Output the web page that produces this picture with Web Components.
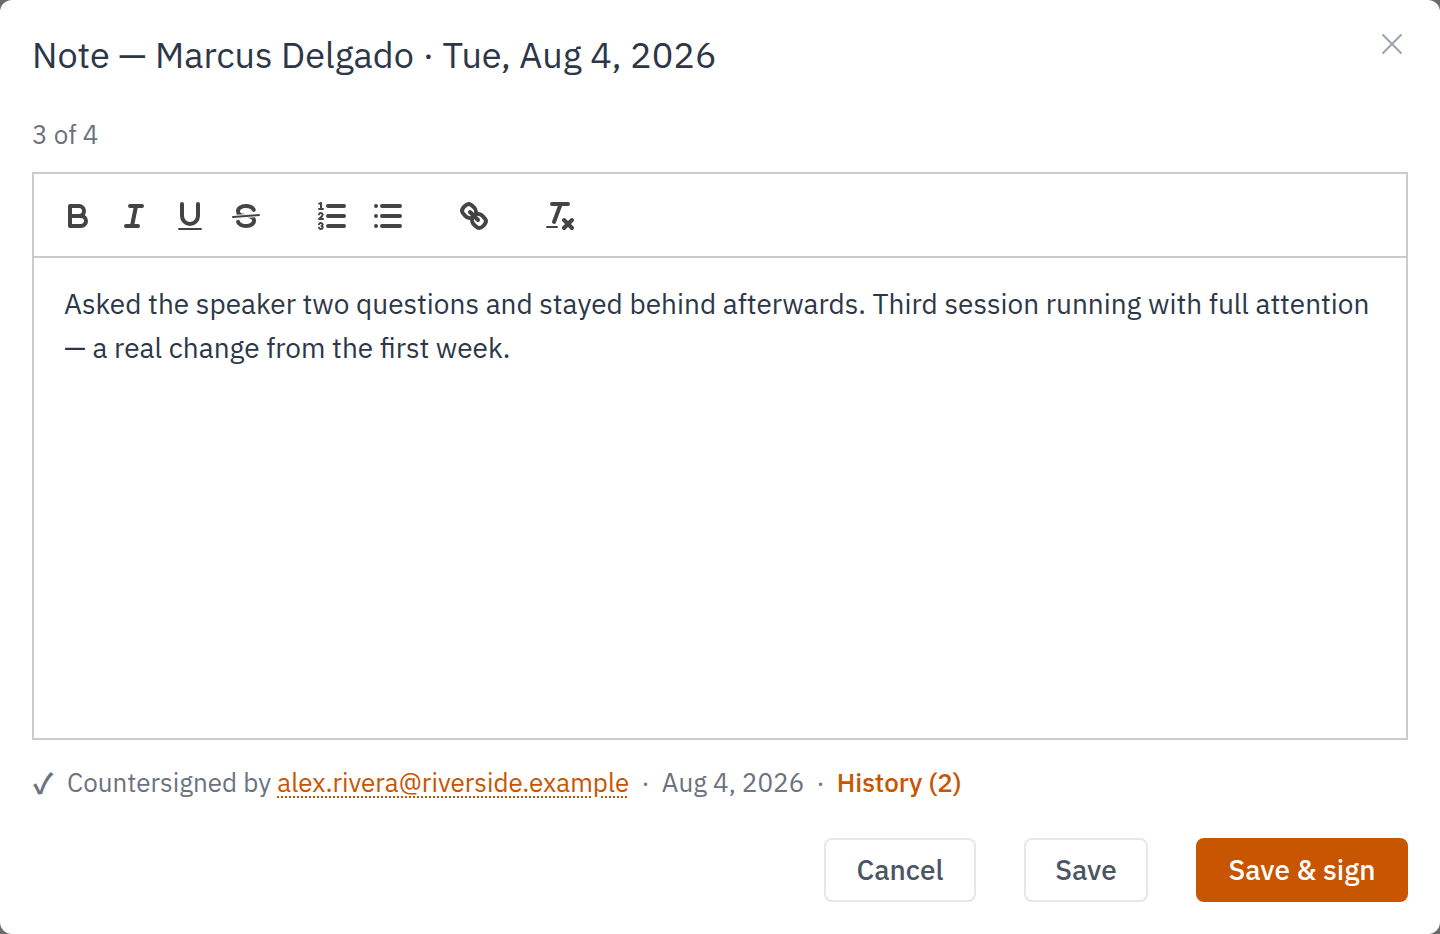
<!DOCTYPE html>
<html>
<head>
<meta charset="utf-8">
<style>
  html, body { margin: 0; height: 100%; background: #6b6b6b; }
  body { font-family: "IBM Plex Sans", "Noto Sans", sans-serif; }
</style>
</head>
<body>
<note-dialog></note-dialog>
<script>
const FONT = '"IBM Plex Sans", "Noto Sans", sans-serif';

class ToolButton extends HTMLElement {
  constructor() {
    super();
    this.attachShadow({ mode: 'open' });
    const icons = {
      bold: '<path class="s" d="M5,4H9.5A2.5,2.5,0,0,1,12,6.5v0A2.5,2.5,0,0,1,9.5,9H5A0,0,0,0,1,5,9V4A0,0,0,0,1,5,4Z"/><path class="s" d="M5,9h5.5A2.5,2.5,0,0,1,13,11.5v0A2.5,2.5,0,0,1,10.5,14H5a0,0,0,0,1,0,0V9A0,0,0,0,1,5,9Z"/>',
      italic: '<line class="s" x1="7" x2="13" y1="4" y2="4"/><line class="s" x1="5" x2="11" y1="14" y2="14"/><line class="s" x1="8" x2="10" y1="14" y2="4"/>',
      underline: '<path class="s" d="M5,3V9a4.006,4.006,0,0,0,4,4H9a4.006,4.006,0,0,0,4-4V3"/><rect class="f" height="1" rx="0.5" ry="0.5" width="12" x="3" y="15"/>',
      strike: '<line class="s t" x1="15.5" x2="2.5" y1="8.5" y2="9.5"/><path class="f" d="M9.007,8C6.542,7.791,6,7.519,6,6.5,6,5.792,7.283,5,9,5c1.571,0,2.765.679,2.969,1.309a1,1,0,0,0,1.9-.617C13.356,4.106,11.354,3,9,3,6.2,3,4,4.538,4,6.5a3.2,3.2,0,0,0,.5,1.843Z"/><path class="f" d="M8.984,10C11.457,10.208,12,10.479,12,11.5c0,.708-1.283,1.5-3,1.5-1.571,0-2.765-.679-2.969-1.309a1,1,0,1,0-1.9.617C4.644,13.894,6.646,15,9,15c2.8,0,5-1.538,5-3.5a3.2,3.2,0,0,0-.5-1.843Z"/>',
      ordered: '<line class="s" x1="7" x2="15" y1="4" y2="4"/><line class="s" x1="7" x2="15" y1="9" y2="9"/><line class="s" x1="7" x2="15" y1="14" y2="14"/><line class="s t" x1="2.5" x2="4.5" y1="5.5" y2="5.5"/><path class="f" d="M3.5,6A0.5,0.5,0,0,1,3,5.5V3.085l-0.276.138A0.5,0.5,0,0,1,2.053,3c-0.124-.247-0.023-0.324.224-0.447l1-.5A0.5,0.5,0,0,1,4,2.5v3A0.5,0.5,0,0,1,3.5,6Z"/><path class="s t" d="M4.5,10.5h-2c0-.234,1.85-1.076,1.85-2.234A0.959,0.959,0,0,0,2.5,8.156"/><path class="s t" d="M2.5,14.846a0.959,0.959,0,0,0,1.85-.109A0.7,0.7,0,0,0,3.75,14a0.688,0.688,0,0,0,.6-0.736,0.959,0.959,0,0,0-1.85-.109"/>',
      bullet: '<line class="s" x1="6" x2="15" y1="4" y2="4"/><line class="s" x1="6" x2="15" y1="9" y2="9"/><line class="s" x1="6" x2="15" y1="14" y2="14"/><line class="s" x1="3" x2="3" y1="4" y2="4"/><line class="s" x1="3" x2="3" y1="9" y2="9"/><line class="s" x1="3" x2="3" y1="14" y2="14"/>',
      link: '<line class="s" x1="7" x2="11" y1="7" y2="11"/><path class="s" d="M8.9,4.577a3.476,3.476,0,0,1,.36,4.679A3.476,3.476,0,0,1,4.577,8.9C3.185,7.5,2.035,6.4,4.217,4.217S7.5,3.185,8.9,4.577Z"/><path class="s" d="M13.423,9.1a3.476,3.476,0,0,0-4.679-.36,3.476,3.476,0,0,0,.36,4.679c1.392,1.392,2.5,2.542,4.679.36S14.815,10.5,13.423,9.1Z"/>',
      clean: '<line class="s" x1="5" x2="13" y1="3" y2="3"/><line class="s" x1="6" x2="9.35" y1="12" y2="3"/><line class="s" x1="11" x2="15" y1="11" y2="15"/><line class="s" x1="15" x2="11" y1="11" y2="15"/><rect class="f" height="1" rx="0.5" ry="0.5" width="6" x="2" y="14"/>'
    };
    this.shadowRoot.innerHTML = `
      <style>
        :host { display: block; width: 56px; height: 48px; box-sizing: border-box; padding: 6px 10px; }
        svg { display: block; width: 36px; height: 36px; }
        .s { fill: none; stroke: #444; stroke-width: 2; stroke-linecap: round; stroke-linejoin: round; }
        .t { stroke-width: 1; }
        .f { fill: #444; }
      </style>
      <svg viewBox="0 0 18 18">${icons[this.getAttribute('icon')]}</svg>`;
  }
}
customElements.define('tool-button', ToolButton);

class RichEditor extends HTMLElement {
  constructor() {
    super();
    this.attachShadow({ mode: 'open' });
    this.shadowRoot.innerHTML = `
      <style>
        :host { display: flex; flex-direction: column; height: 568px; box-sizing: border-box; border: 2px solid #ccc; }
        .toolbar { display: flex; gap: 30px; padding: 18px 16px 16px; border-bottom: 2px solid #ccc; }
        .group { display: flex; }
        .body { flex: 1; padding: 24px 30px; font: 28px/44px ${FONT}; color: #2d3748; }
      </style>
      <div class="toolbar">
        <div class="group"><tool-button icon="bold"></tool-button><tool-button icon="italic"></tool-button><tool-button icon="underline"></tool-button><tool-button icon="strike"></tool-button></div>
        <div class="group"><tool-button icon="ordered"></tool-button><tool-button icon="bullet"></tool-button></div>
        <div class="group"><tool-button icon="link"></tool-button></div>
        <div class="group"><tool-button icon="clean"></tool-button></div>
      </div>
      <div class="body"><slot></slot></div>`;
  }
}
customElements.define('rich-editor', RichEditor);

class ActionButton extends HTMLElement {
  constructor() {
    super();
    this.attachShadow({ mode: 'open' });
    this.shadowRoot.innerHTML = `
      <style>
        :host { display: flex; align-items: center; justify-content: center; height: 64px; box-sizing: border-box; padding-bottom: 2px; border-radius: 8px;
          border: 2px solid #e5e7eb; background: #fff; color: #4b5563; font: 500 28px ${FONT}; }
        :host([primary]) { background: #c85500; border-color: #c85500; color: #fff; }
      </style>
      <slot></slot>`;
  }
}
customElements.define('action-button', ActionButton);

class NoteDialog extends HTMLElement {
  constructor() {
    super();
    this.attachShadow({ mode: 'open' });
    this.shadowRoot.innerHTML = `
      <style>
        :host { display: flex; flex-direction: column; height: 934px; box-sizing: border-box; padding: 32px; background: #fff; border-radius: 12px; font-family: ${FONT}; position: relative; }
        h2 { margin: 0; font: 400 36px/46px ${FONT}; color: #2d3748; }
        .count { margin: 39px 0 21px; font-size: 26px; line-height: 34px; color: #6b7280; }
        .close { position: absolute; top: 34px; right: 38px; width: 20px; height: 20px; }
        .meta { display: flex; align-items: center; margin-top: 24px; font-size: 26px; line-height: 36px; color: #6b7280; white-space: pre; }
        .meta a { color: #c85500; text-decoration: underline dotted 2px; text-underline-offset: 4px; }
        .meta b { color: #c85500; font-weight: 500; }
        .sep { margin: 0 12px; }
        .check { width: 34px; padding-left: 1px; font: 700 28px/36px "Noto Sans CJK SC", sans-serif; }
        .actions { display: flex; justify-content: flex-end; gap: 48px; margin-top: 38px; }
        .cancel { width: 152px; }
        .save { width: 124px; }
        .sign { width: 212px; }
      </style>
      <h2>Note — Marcus Delgado · Tue, Aug 4, 2026</h2>
      <svg class="close" viewBox="0 0 20 20"><path d="M1 1 19 19M19 1 1 19" stroke="#9ca3af" stroke-width="2" stroke-linecap="round" fill="none"/></svg>
      <div class="count">3 of 4</div>
      <rich-editor>Asked the speaker two questions and stayed behind afterwards. Third session running with full attention — a real change from the first week.</rich-editor>
      <div class="meta"><span class="check">✓</span>Countersigned by <a>alex.rivera@riverside.example</a><span class="sep">·</span>Aug 4, 2026<span class="sep">·</span><b>History (2)</b></div>
      <div class="actions"><action-button class="cancel">Cancel</action-button><action-button class="save">Save</action-button><action-button class="sign" primary>Save &amp; sign</action-button></div>`;
  }
}
customElements.define('note-dialog', NoteDialog);
</script>
</body>
</html>
